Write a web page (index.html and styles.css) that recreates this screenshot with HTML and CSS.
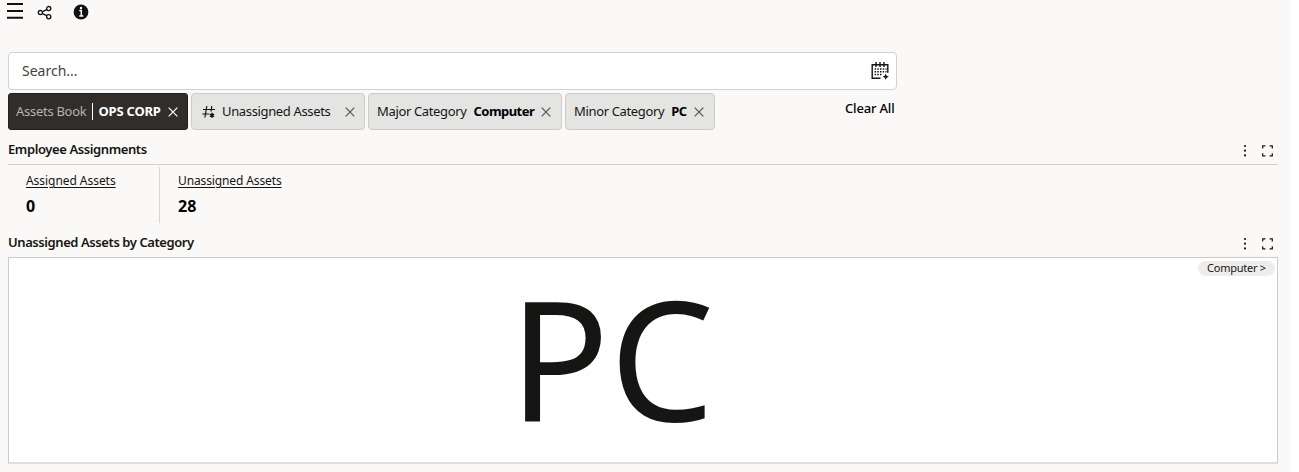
FILE: index.html
```
<!DOCTYPE html>
<html lang="en">
<head>
<meta charset="utf-8">
<title>Employee Assignments</title>
<link rel="stylesheet" href="styles.css">
</head>
<body>
<div class="page">
  <header class="toolbar">
    <svg class="menu-icon" width="18" height="18" viewBox="0 0 18 18"><path d="M1 2h16M1 9h16M1 15.800h16" stroke="#111" stroke-width="2" fill="none"/></svg>
    <svg class="share-icon" width="16" height="16" viewBox="0 0 16 16" fill="none" stroke="#111" stroke-width="1.300"><circle cx="3.400" cy="8.600" r="2.100"/><circle cx="11.700" cy="4.600" r="2.100"/><circle cx="11.700" cy="12.700" r="2.100"/><path d="M5.400 7.700l4.400-2M5.400 9.600l4.400 2.100"/></svg>
    <svg class="info-icon" width="16" height="16" viewBox="0 0 16 16"><circle cx="8" cy="8" r="7.400" fill="#111"/><path d="M6.300 6.500h2v5.200M6.300 12h4" stroke="#fff" stroke-width="1.500" fill="none"/><circle cx="8" cy="4" r="1.200" fill="#fff"/></svg>
  </header>

  <div class="search">
    <span class="search-text">Search...</span>
    <svg width="20" height="20" viewBox="0 0 20 20" fill="none" stroke="#161513" stroke-width="1.400"><path d="M10.500 17.300H2.200V3.700h15.600v8M6 1v5M14 1v5M10 1v5"/><path d="M4.600 8h12M4.600 10.800h12M4.600 13.500h8" stroke-dasharray="1.500 1.200" stroke-width="1.500"/><path d="M15.700 12.800l1 2 2.100 1-2.100 1-1 2-1-2-2.100-1 2.100-1z" fill="#161513" stroke="none"/></svg>
  </div>

  <div class="filters">
    <div class="chip chip-dark">
      <span class="chip-name">Assets Book</span><i class="bar"></i><b class="chip-value">OPS CORP</b>
      <svg class="close" width="10" height="10" viewBox="0 0 10 10"><path d="M.7.700l8.600 8.600M9.300.700L.7 9.300"/></svg>
    </div>
    <div class="chip chip-metric">
      <svg class="hash" width="14" height="14" viewBox="0 0 14 14" fill="none" stroke="#161513" stroke-width="1.200"><path d="M1 4.500h12M.3 9h7M4.800 1L2.900 12.500M9.800 1L9 6.500"/><path d="M10 7.800v5M7.900 9.100l4.200 2.400M12.100 9.100l-4.200 2.400" stroke-width="1.500"/></svg>
      <span class="chip-name">Unassigned Assets</span>
      <svg class="close" width="10" height="10" viewBox="0 0 10 10"><path d="M.7.700l8.600 8.600M9.300.700L.7 9.300"/></svg>
    </div>
    <div class="chip chip-major">
      <span class="chip-name">Major Category</span><b class="chip-value">Computer</b>
      <svg class="close" width="10" height="10" viewBox="0 0 10 10"><path d="M.7.700l8.600 8.600M9.300.700L.7 9.300"/></svg>
    </div>
    <div class="chip chip-minor">
      <span class="chip-name">Minor Category</span><b class="chip-value">PC</b>
      <svg class="close" width="10" height="10" viewBox="0 0 10 10"><path d="M.7.700l8.600 8.600M9.300.700L.7 9.300"/></svg>
    </div>
    <span class="clear">Clear All</span>
  </div>

  <section class="panel-head head-kpi">
    <h2 class="title-emp">Employee Assignments</h2>
    <svg class="actions" width="32" height="14" viewBox="0 0 32 14"><g fill="#161513"><circle cx="2" cy="2" r="1.100"/><circle cx="2" cy="6.700" r="1.100"/><circle cx="2" cy="11.400" r="1.100"/></g><path d="M19.700 4.600V1.900h2.700M26.600 1.900h2.700v2.700M29.300 9.200v2.700h-2.700M22.400 11.900h-2.700v-2.700" fill="none" stroke="#161513" stroke-width="1.200"/></svg>
  </section>
  <section class="kpis">
    <div class="kpi kpi-first"><span class="kpi-label label-a">Assigned Assets</span><strong>0</strong></div>
    <div class="kpi"><span class="kpi-label label-b">Unassigned Assets</span><strong>28</strong></div>
  </section>

  <section class="panel-head head-cloud">
    <h2 class="title-cat">Unassigned Assets by Category</h2>
    <svg class="actions" width="32" height="14" viewBox="0 0 32 14"><g fill="#161513"><circle cx="2" cy="2" r="1.100"/><circle cx="2" cy="6.700" r="1.100"/><circle cx="2" cy="11.400" r="1.100"/></g><path d="M19.700 4.600V1.900h2.700M26.600 1.900h2.700v2.700M29.300 9.200v2.700h-2.700M22.400 11.900h-2.700v-2.700" fill="none" stroke="#161513" stroke-width="1.200"/></svg>
  </section>
  <section class="cloud">
    <span class="cloud-word">PC</span>
    <span class="crumb">Computer &gt;</span>
  </section>
</div>
</body>
</html>
```
FILE: styles.css
```
* { box-sizing: border-box; }
body {
  margin: 0;
  background: #fff;
  color: #161513;
  font: 13px/18px "Noto Sans", "Open Sans", sans-serif;
  overflow: hidden;
}
svg { display: block; flex: none; }
.page {
  width: 1291px;
  height: 472px;
  padding: 0 13px 0 8px;
  background: #faf9f8;
}
.toolbar { display: flex; height: 52px; }
.menu-icon { margin: 2px 0 0 -2px; }
.share-icon { margin: 4px 0 0 13px; }
.info-icon { margin: 4px 0 0 20px; }

.search {
  display: flex;
  align-items: center;
  justify-content: space-between;
  width: 889px;
  height: 38px;
  padding: 0 6px 0 13px;
  background: #fff;
  border: 1px solid #d3d1cf;
  border-radius: 4px;
}
.search-text { font-size: 14px; color: #45423f; }

.filters { display: flex; gap: 3px; margin-top: 3px; height: 36px; }
.chip {
  display: flex;
  align-items: center;
  height: 37px;
  padding: 0 10px 0 8px;
  background: #e4e4e3;
  border: 1px solid #cccbc9;
  border-radius: 4px;
  white-space: nowrap;
}
.chip-name, .chip-value { padding-bottom: 1px; }
.chip-name { letter-spacing: -0.35px; }
.chip .close { margin-left: auto; fill: none; stroke: #55524f; stroke-width: 1.2; }
.chip-value { margin-left: 7px; color: #000; letter-spacing: -0.55px; }
.chip-dark { width: 180px; padding-left: 7px; padding-right: 9px; background: #312d2a; border-color: #221f1d; color: #fff; border-radius: 3px; }
.chip-dark .chip-name { color: #b5b2af; letter-spacing: -0.28px; }
.chip-dark .close { stroke: #fff; }
.bar { width: 1px; height: 17px; margin-left: 6px; background: #fff; }
.chip-dark .chip-value { margin-left: 5px; color: #fff; letter-spacing: -0.2px; }
.chip-metric { width: 174px; padding-left: 10px; padding-right: 9px; }
.chip-metric .chip-name { margin-left: 6px; padding-bottom: 2px; }
.chip-major { width: 194px; }
.chip-minor { width: 150px; }
.clear { margin: 6px 0 0 127px; font-weight: 500; color: #000; white-space: nowrap; letter-spacing: -0.17px; }

.panel-head { display: flex; justify-content: space-between; width: 1270px; }
.panel-head h2 { margin: 0; font-size: 13px; line-height: 18px; font-weight: 600; color: #161513; }
.title-emp { letter-spacing: -0.4px; }
.title-cat { letter-spacing: -0.42px; }
.actions { margin-right: 3px; }
.head-kpi { height: 36px; padding-top: 11px; border-bottom: 1px solid #d3d1cf; }
.head-kpi .actions { margin-top: 4px; }
.kpis { display: flex; height: 58px; padding-top: 2px; }
.kpi { height: 56px; padding: 5px 0 0 18px; }
.kpi-first { width: 152px; border-right: 1px solid #d9d7d5; }
.kpi-label { display: block; font-size: 12px; line-height: 18px; text-decoration: underline; white-space: nowrap; text-underline-offset: 2px; text-decoration-thickness: 1px; }
.label-a { letter-spacing: -0.05px; }
.label-b { letter-spacing: -0.12px; }
.kpi strong { display: block; margin-top: 6px; font-size: 16px; line-height: 20px; color: #000; }
.head-cloud { height: 34px; padding-top: 10px; }
.head-cloud .actions { margin-top: 4px; }
.cloud {
  position: relative;
  width: 1270px;
  height: 207px;
  padding-left: 500px;
  background: #fff;
  border: 1px solid #cdcbc9;
  border-bottom-width: 2px;
  border-bottom-color: #e0dfdd;
}
.cloud-word { display: block; font-size: 166px; line-height: 198px; }
.crumb {
  position: absolute;
  top: 3px;
  right: 2px;
  width: 77px;
  height: 15px;
  border-radius: 8px;
  background: #eeedec;
  font-size: 11px;
  line-height: 14px;
  letter-spacing: -0.25px;
  text-align: center;
  white-space: nowrap;
}
```
